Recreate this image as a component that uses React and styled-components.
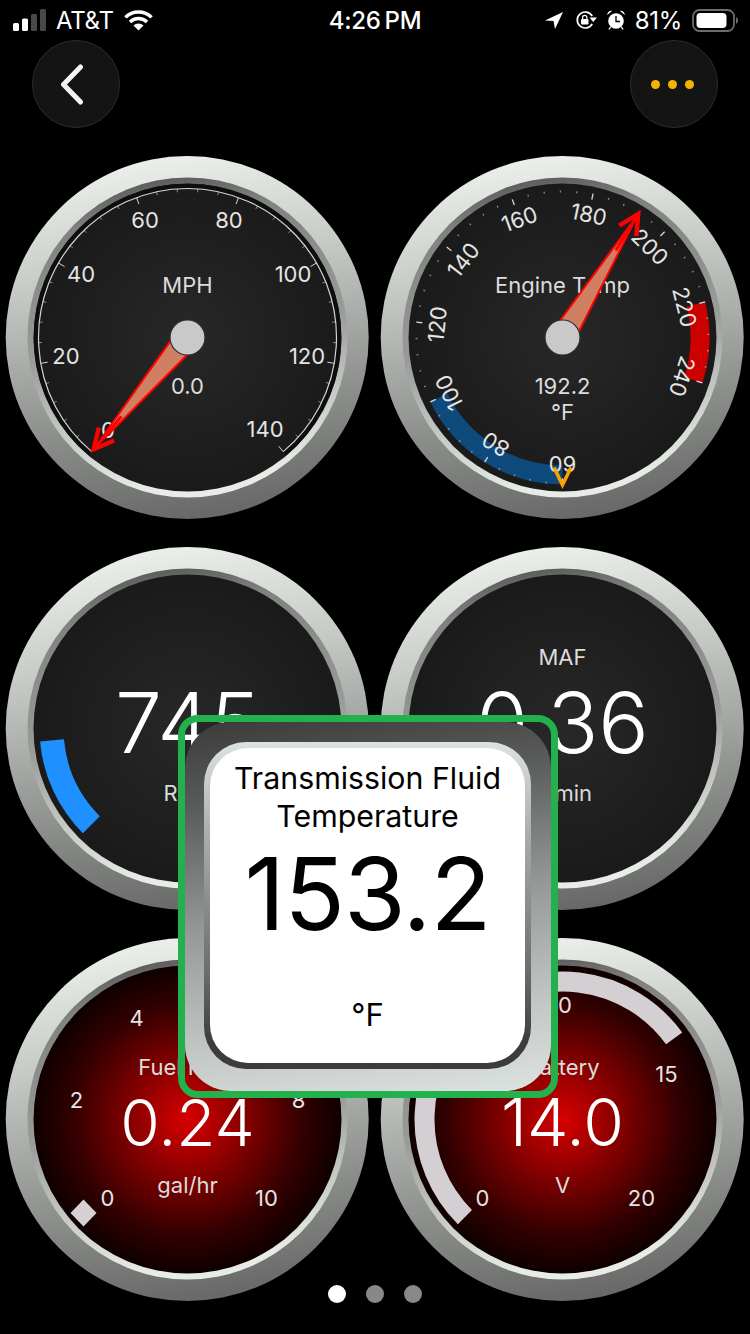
import React, { useId } from "react";
import styled, { createGlobalStyle } from "styled-components";

const Global = createGlobalStyle`
  html, body { margin: 0; padding: 0; background: #000; }
  body { font-family: Inter, "Noto Sans", sans-serif; overflow: hidden; }
`;

const Page = styled.div`
  position: relative;
  width: 750px;
  height: 1334px;
  background: #000;
  overflow: hidden;
`;

const StatusBar = styled.div`
  height: 40px;
  display: grid;
  grid-template-columns: 1fr auto 1fr;
  align-items: center;
  color: #fff;
  font-size: 24px;
`;
const StatusLeft = styled.div`
  display: flex;
  align-items: center;
  padding-left: 13px;
  gap: 10px;
`;
const StatusRight = styled.div`
  display: flex;
  align-items: center;
  justify-content: flex-end;
  padding-right: 12px;
  gap: 10px;
`;
const Clock = styled.div`
  font-weight: 500;
  font-size: 24px;
  letter-spacing: -0.3px;
  word-spacing: -2px;
  width: 94px;
  white-space: nowrap;
  text-align: center;
`;
const StatusText = styled.span`
  letter-spacing: -0.3px;
  white-space: nowrap;
`;

const NavRow = styled.div`
  height: 110px;
  display: flex;
  justify-content: space-between;
  align-items: flex-start;
  padding: 0 32px;
  box-sizing: border-box;
`;
const RoundButton = styled.button`
  width: 88px;
  height: 88px;
  padding: 0;
  border-radius: 50%;
  border: 1.5px solid #2b2b2b;
  background: #141414;
  display: flex;
  align-items: center;
  justify-content: center;
`;
const MoreDots = styled.span`
  display: flex;
  gap: 8px;
  margin-right: 3px;
`;
const MoreDot = styled.span`
  width: 9px;
  height: 9px;
  border-radius: 50%;
  background: #f5b400;
`;

const GaugeGrid = styled.div`
  display: grid;
  grid-template-columns: 375px 375px;
  grid-auto-rows: 375px;
  row-gap: 16px;
`;
const GaugeSvg = styled.svg`
  display: block;
  width: 375px;
  height: 375px;
`;
const ScaleLabel = styled.text`
  font-size: 22px;
  fill: #e4e4e4;
  text-anchor: middle;
  dominant-baseline: central;
`;
const Caption = styled.text`
  font-size: 22px;
  fill: #dcdcdc;
  text-anchor: middle;
`;
const BigValue = styled.text`
  font-size: ${(p) => p.$size}px;
  font-weight: 300;
  fill: #fff;
  text-anchor: middle;
`;

const Pager = styled.div`
  position: absolute;
  left: 0;
  right: 0;
  top: 1285px;
  display: flex;
  justify-content: center;
  gap: 20px;
`;
const PagerDot = styled.span`
  width: 18px;
  height: 18px;
  border-radius: 50%;
  background: ${(p) => (p.$active ? "#fff" : "#888")};
`;

const Popup = styled.div`
  position: absolute;
  left: 178px;
  top: 715px;
  width: 380px;
  height: 383px;
  box-sizing: border-box;
  border: 7px solid #22b14c;
  border-radius: 20px;
`;
const PopupBezel = styled.div`
  height: 100%;
  box-sizing: border-box;
  padding: 20px 20px 22px 19px;
  border-radius: 46px;
  background: linear-gradient(172deg, #3a3a3a 0%, #5c5e5d 22%, #959897 50%, #c4c9c7 80%, #dde3e0 100%);
`;
const PopupRing = styled.div`
  height: 100%;
  box-sizing: border-box;
  padding: 6px;
  border-radius: 42px;
  background: linear-gradient(180deg, #dde3e0 0%, #a9aeac 28%, #6c6e6d 70%, #3c3c3c 92%);
`;
const PopupCard = styled.div`
  height: 100%;
  box-sizing: border-box;
  border-radius: 38px;
  background: #fff;
  color: #000;
  display: flex;
  flex-direction: column;
  align-items: center;
  text-align: center;
`;
const PopupTitle = styled.div`
  font-size: 30.3px;
  line-height: 38px;
  margin-top: 11px;
`;
const PopupValue = styled.div`
  font-size: 100px;
  line-height: 100px;
  margin-top: 9px;
  letter-spacing: -1px;
`;
const PopupUnit = styled.div`
  font-size: 31px;
  line-height: 38px;
  margin-top: 52px;
`;

const rad = (d) => (d * Math.PI) / 180;
const polar = (r, d) => [r * Math.sin(rad(d)), -r * Math.cos(rad(d))];
const arcPath = (r, a, b) => {
  const [x1, y1] = polar(r, a);
  const [x2, y2] = polar(r, b);
  return `M${x1} ${y1} A${r} ${r} 0 ${Math.abs(b - a) > 180 ? 1 : 0} 1 ${x2} ${y2}`;
};

function Ticks({ from, step, count, majorEvery, outer, majorIn, minorIn, width, minorOpacity }) {
  const out = [];
  for (let i = 0; i <= count; i++) {
    const a = from + i * step;
    const major = i % majorEvery === 0;
    const [x1, y1] = polar(outer, a);
    const [x2, y2] = polar(major ? majorIn : minorIn, a);
    out.push(
      <line
        key={i}
        x1={x1}
        y1={y1}
        x2={x2}
        y2={y2}
        stroke="#d8d8d8"
        strokeWidth={width}
        opacity={major ? 1 : minorOpacity}
      />
    );
  }
  return out;
}

function Needle({ angle, length }) {
  return (
    <g transform={`rotate(${angle})`}>
      <polygon
        points={`-11,-12 11,-12 1,${-length + 18} -1,${-length + 18}`}
        fill="#cf8062"
        stroke="#ff0000"
        strokeWidth="2"
        strokeLinejoin="round"
      />
      <line x1="0" y1={-length + 48} x2="0" y2={-length + 6} stroke="#ff0000" strokeWidth="3" />
      <polyline
        points={`-10,${-length + 25} 0,${-length + 5} 10,${-length + 25}`}
        fill="none"
        stroke="#ff0000"
        strokeWidth="4.4"
      />
    </g>
  );
}

const Hub = () => <circle r="17.5" fill="#c9c9c9" stroke="#2e2e2e" strokeWidth="1.2" />;

function Gauge({ face = "dark", children }) {
  const uid = useId().replace(/[^a-zA-Z0-9]/g, "");
  return (
    <GaugeSvg viewBox="-187.5 -187.5 375 375">
      <defs>
        <linearGradient id={`${uid}b`} x1="0.42" y1="0" x2="0.58" y2="1">
          <stop offset="0" stopColor="#ecf0ea" />
          <stop offset="0.3" stopColor="#c7cbc6" />
          <stop offset="0.65" stopColor="#949794" />
          <stop offset="1" stopColor="#666766" />
        </linearGradient>
        <linearGradient id={`${uid}r`} x1="0.42" y1="0" x2="0.58" y2="1">
          <stop offset="0" stopColor="#5c5c5c" />
          <stop offset="0.12" stopColor="#808280" />
          <stop offset="0.5" stopColor="#9a9c9a" />
          <stop offset="0.75" stopColor="#c8ccc6" />
          <stop offset="0.95" stopColor="#e8ece6" />
        </linearGradient>
        <radialGradient id={`${uid}f`}>
          {face === "red" ? (
            <>
              <stop offset="0" stopColor="#d80000" />
              <stop offset="0.25" stopColor="#a00000" />
              <stop offset="0.5" stopColor="#690000" />
              <stop offset="0.75" stopColor="#330000" />
              <stop offset="1" stopColor="#0e0000" />
            </>
          ) : (
            <>
              <stop offset="0" stopColor="#282828" />
              <stop offset="1" stopColor="#1a1a1a" />
            </>
          )}
        </radialGradient>
      </defs>
      <circle cx="-0.3" r="181.5" fill={`url(#${uid}b)`} />
      <circle r="160" fill={`url(#${uid}r)`} />
      <circle r="154" fill={`url(#${uid}f)`} />
      {children}
    </GaugeSvg>
  );
}

const at = (r, a) => {
  const [x, y] = polar(r, a);
  return { x, y };
};

const SPEED_LABELS = [
  [0, -79.5, 92.5],
  [20, -121.5, 18.5],
  [40, -106.5, -63.5],
  [60, -42.5, -117.5],
  [80, 41.5, -117.5],
  [100, 105.5, -63.5],
  [120, 119.5, 18.5],
  [140, 77.5, 91.5],
];

function SpeedGauge() {
  return (
    <Gauge>
      <path d={arcPath(151.5, -140, 140)} fill="none" stroke="#0e0e0e" strokeWidth="4.5" />
      <path d={arcPath(149, -140, 140)} fill="none" stroke="#d4d4d4" strokeWidth="1.2" />
      <Ticks from={-140} step={8} count={35} majorEvery={5} outer={149} majorIn={142} minorIn={145.5} width={1} minorOpacity={0.6} />
      {SPEED_LABELS.map(([v, x, y]) => (
        <ScaleLabel key={v} x={x} y={y}>
          {v}
        </ScaleLabel>
      ))}
      <Caption y="-45">MPH</Caption>
      <Caption y="56">0.0</Caption>
      <Needle angle={-140} length={151} />
      <Hub />
    </Gauge>
  );
}

function TempGauge() {
  const labels = [60, 80, 100, 120, 140, 160, 180, 200, 220, 240];
  return (
    <Gauge>
      <path d={arcPath(137.5, -180, -116)} fill="none" stroke="#0e4a7c" strokeWidth="19" />
      <path d={arcPath(137.5, 76, 108)} fill="none" stroke="#cc0000" strokeWidth="19" />
      <Ticks from={-180} step={6.4} count={45} majorEvery={5} outer={147} majorIn={141} minorIn={145} width={1.3} minorOpacity={0.55} />
      {labels.map((v) => {
        const a = -180 + (v - 60) * 1.6;
        const { x, y } = at(126, a);
        return (
          <ScaleLabel key={v} x={x} y={y} transform={`rotate(${a} ${x} ${y})`}>
            {v}
          </ScaleLabel>
        );
      })}
      <Caption y="-45">Engine Temp</Caption>
      <Caption y="56">192.2</Caption>
      <Caption y="82">°F</Caption>
      <polyline points="-8.5,130 0,147.5 8.5,130" fill="none" stroke="#f5a400" strokeWidth="3.6" />
      <Needle angle={31.5} length={150} />
      <Hub />
    </Gauge>
  );
}

function RpmGauge() {
  return (
    <Gauge>
      <path d={arcPath(136, -135, -95)} fill="none" stroke="#1e90ff" strokeWidth="24" />
      <BigValue $size={84} y="24.5">745</BigValue>
      <Caption y="72">RPM</Caption>
    </Gauge>
  );
}

function MafGauge() {
  return (
    <Gauge>
      <Caption y="-64">MAF</Caption>
      <BigValue $size={84} y="24.5">0.36</BigValue>
      <Caption y="72">g/min</Caption>
    </Gauge>
  );
}

const FUEL_LABELS = [
  [0, -80, 78],
  [2, -111, -20],
  [4, -51, -102],
  [6, 51, -102],
  [8, 111, -20],
  [10, 79, 78],
];

function FuelGauge() {
  return (
    <Gauge face="red">
      {FUEL_LABELS.map(([v, x, y]) => (
        <ScaleLabel key={v} x={x} y={y}>
          {v}
        </ScaleLabel>
      ))}
      <Caption y="-44.5">Fuel Flow</Caption>
      <BigValue $size={64} y="26.5">0.24</BigValue>
      <Caption y="73.5">gal/hr</Caption>
      <polygon points="-104,80 -91,93.5 -104,107 -117,93.5" fill="#d6d2d4" />
    </Gauge>
  );
}

const BATTERY_LABELS = [
  [0, -80, 78],
  [5, -104, -46],
  [10, -2, -115],
  [15, 104, -46],
  [20, 79, 78],
];

function BatteryGauge() {
  return (
    <Gauge face="red">
      <path d={arcPath(138, -135, 54)} fill="none" stroke="#d3cfd2" strokeWidth="20" />
      {BATTERY_LABELS.map(([v, x, y]) => (
        <ScaleLabel key={v} x={x} y={y}>
          {v}
        </ScaleLabel>
      ))}
      <Caption y="-44.5">Battery</Caption>
      <BigValue $size={66} y="26.5">14.0</BigValue>
      <Caption y="73">V</Caption>
    </Gauge>
  );
}

const SignalIcon = () => (
  <svg width="33" height="22" viewBox="0 0 33 22">
    <rect x="0" y="14" width="6" height="8" rx="1.5" fill="#fff" />
    <rect x="9" y="9.5" width="6" height="12.5" rx="1.5" fill="#fff" />
    <rect x="18" y="5" width="6" height="17" rx="1.5" fill="#484848" />
    <rect x="27" y="0" width="6" height="22" rx="1.5" fill="#484848" />
  </svg>
);
const WifiIcon = () => (
  <svg width="29" height="21" viewBox="0 0 29 21" fill="none" stroke="#fff" strokeWidth="3.4">
    <path d="M1.4 7.4 A18.5 18.5 0 0 1 27.6 7.4" />
    <path d="M6 12 A12 12 0 0 1 23 12" />
    <path d="M14.5 20.5 L9.5 15.5 A7 7 0 0 1 19.5 15.5 Z" fill="#fff" stroke="none" />
  </svg>
);
const LocationIcon = () => (
  <svg width="21" height="17" viewBox="0 0 21 17">
    <polygon points="18,0 0,8.5 8.5,9 10,17" fill="#fff" />
  </svg>
);
const RotationIcon = () => (
  <svg width="21" height="18" viewBox="0 0 21 18" fill="none">
    <path d="M16.2 5 A8 8 0 1 0 16.2 13" stroke="#fff" strokeWidth="1.7" />
    <polygon points="13.5,6.5 21,6.5 17.2,11" fill="#fff" />
    <rect x="5" y="8" width="7.5" height="5.5" rx="1" fill="#fff" />
    <path d="M6.6 8 V6.5 A2.1 2.1 0 0 1 10.9 6.5 V8" stroke="#fff" strokeWidth="1.2" />
  </svg>
);
const AlarmIcon = () => (
  <svg width="18" height="20" viewBox="0 0 18 20" fill="none">
    <circle cx="9" cy="11" r="7.8" fill="#fff" />
    <path d="M9 6 V11.5 H13" stroke="#000" strokeWidth="1.3" />
    <path d="M0.3 5 A4 4 0 0 1 5.2 0.8 Z M17.7 5 A4 4 0 0 0 12.8 0.8 Z" fill="#fff" />
    <path d="M3.5 17 L2 19.5 M14.5 17 L16 19.5" stroke="#fff" strokeWidth="1.4" />
  </svg>
);
const BatteryIcon = () => (
  <svg width="46" height="23" viewBox="0 0 46 23" fill="none">
    <rect x="1" y="1" width="41" height="21" rx="6.5" stroke="#6c6c6c" strokeWidth="1.8" />
    <rect x="4.5" y="4" width="30" height="15" rx="4" fill="#fff" />
    <path d="M44 8 A4 4 0 0 1 44 15 Z" fill="#6c6c6c" />
  </svg>
);
const BackIcon = () => (
  <svg width="30" height="44" viewBox="0 0 30 44" fill="none">
    <polyline points="19.5,5 2.5,22.5 19.5,40" stroke="#f4f4f4" strokeWidth="5" strokeLinecap="round" strokeLinejoin="round" />
  </svg>
);

export default function App() {
  return (
    <Page>
      <Global />
      <StatusBar>
        <StatusLeft>
          <SignalIcon />
          <StatusText>AT&amp;T</StatusText>
          <WifiIcon />
        </StatusLeft>
        <Clock>4:26 PM</Clock>
        <StatusRight>
          <LocationIcon />
          <RotationIcon />
          <AlarmIcon />
          <StatusText>81%</StatusText>
          <BatteryIcon />
        </StatusRight>
      </StatusBar>
      <NavRow>
        <RoundButton aria-label="Back">
          <BackIcon />
        </RoundButton>
        <RoundButton aria-label="More">
          <MoreDots>
            <MoreDot />
            <MoreDot />
            <MoreDot />
          </MoreDots>
        </RoundButton>
      </NavRow>
      <GaugeGrid>
        <SpeedGauge />
        <TempGauge />
        <RpmGauge />
        <MafGauge />
        <FuelGauge />
        <BatteryGauge />
      </GaugeGrid>
      <Pager>
        <PagerDot $active />
        <PagerDot />
        <PagerDot />
      </Pager>
      <Popup>
        <PopupBezel>
          <PopupRing>
            <PopupCard>
              <PopupTitle>
                Transmission Fluid
                <br />
                Temperature
              </PopupTitle>
              <PopupValue>153.2</PopupValue>
              <PopupUnit>°F</PopupUnit>
            </PopupCard>
          </PopupRing>
        </PopupBezel>
      </Popup>
    </Page>
  );
}
